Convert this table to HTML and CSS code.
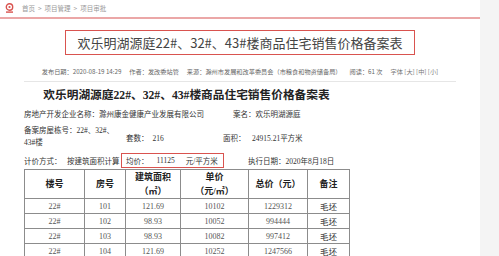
FILE: index.html
```html
<!DOCTYPE html>
<html lang="zh">
<head>
<meta charset="utf-8">
<link rel="stylesheet" href="styles.css">
</head>
<body>
<div class="main">
  <div class="crumb">
    <svg class="crumb-icon" width="9" height="10" viewBox="0 0 9 10">
      <circle cx="4.5" cy="4" r="3.2" fill="none" stroke="#d9534f" stroke-width="1.4"/>
      <circle cx="4.5" cy="4" r="1.1" fill="#d9534f"/>
      <rect x="1" y="8.4" width="7" height="1.4" fill="#d9534f"/>
    </svg>
    <span>首页</span><span class="sep">&gt;</span><span>项目管理</span><span class="sep">&gt;</span><span>项目审批</span>
  </div>
  <div class="titlewrap">
    <div class="titlebox">欢乐明湖源庭22#、32#、43#楼商品住宅销售价格备案表</div>
  </div>
  <div class="meta">
    <span>发布日期：2020-08-19 14:29</span>
    <span>作者：发改委站管</span>
    <span>来源：滁州市发展和改革委员会（市粮食和物资储备局）</span>
    <span>阅读：61 次</span>
    <span class="size">字体 [大] [中] [小]</span>
  </div>
  <div class="doc">
    <h1 class="doc-title">欢乐明湖源庭22#、32#、43#楼商品住宅销售价格备案表</h1>
    <div class="row r1">
      <div class="c-dev">房地产开发企业名称：滁州康金健康产业发展有限公司</div>
      <div class="c-name">案名：欢乐明湖源庭</div>
    </div>
    <div class="row r2">
      <div class="c-bld">备案房屋栋号：22#、32#、43#楼</div>
      <div class="c-sets">套数：<span class="num">216</span></div>
      <div class="c-area">面积：</div>
      <div class="c-areav">24915.21平方米</div>
    </div>
    <div class="row r3">
      <div class="c-way">计价方式：</div>
      <div class="c-wayv">按建筑面积计算</div>
      <div class="avg"><span>均价：</span><span class="avg-num">11125</span><span>元/平方米</span></div>
      <div class="c-date">执行日期：2020年8月18日</div>
    </div>
    <table class="price">
      <colgroup>
        <col class="w1"><col class="w2"><col class="w3"><col class="w4"><col class="w5"><col class="w6">
      </colgroup>
      <thead>
        <tr><th>楼号</th><th>房号</th><th>建筑面积<br>（㎡）</th><th>单价<br>（元/㎡）</th><th>总价（元）</th><th>备注</th></tr>
      </thead>
      <tbody>
        <tr><td>22#</td><td>101</td><td>121.69</td><td>10102</td><td>1229312</td><td class="note">毛坯</td></tr>
        <tr><td>22#</td><td>102</td><td>98.93</td><td>10052</td><td>994444</td><td class="note">毛坯</td></tr>
        <tr><td>22#</td><td>103</td><td>98.93</td><td>10082</td><td>997412</td><td class="note">毛坯</td></tr>
        <tr><td>22#</td><td>104</td><td>121.69</td><td>10252</td><td>1247566</td><td class="note">毛坯</td></tr>
      </tbody>
    </table>
  </div>
</div>
<div class="side"></div>
</body>
</html>
```
FILE: styles.css
```css
html, body {
  margin: 0;
  padding: 0;
  background: #fff;
}
body {
  display: flex;
  width: 499px;
  height: 256px;
  overflow: hidden;
  font-family: "Noto Sans CJK SC", "Noto Sans", sans-serif;
}
.main {
  width: 480px;
  flex: none;
}
.side {
  flex: 1;
  background: #f4f4f4;
}
.crumb {
  box-sizing: border-box;
  height: 19px;
  padding: 0 0 2px 5px;
  border-bottom: 2px solid #eba7a7;
  display: flex;
  align-items: center;
  font-size: 6.5px;
  color: #999;
}
.crumb-icon {
  margin-right: 8px;
}
.crumb .sep {
  margin: 0 3px;
}
.titlewrap {
  display: flex;
  justify-content: center;
  padding-top: 11px;
}
.titlebox {
  width: 350px;
  height: 25px;
  box-sizing: border-box;
  border: 1.5px solid #d9534f;
  font-size: 13px;
  color: #444;
  display: flex;
  align-items: center;
  justify-content: center;
}
.meta {
  display: flex;
  justify-content: center;
  gap: 8px;
  margin-top: 10px;
  height: 12px;
  align-items: center;
  font-size: 6.2px;
  color: #666;
  white-space: nowrap;
}
.meta .size {
  color: #777;
}
.doc {
  margin: 4px 24px 0;
  border-top: 1px solid #e6e6e6;
  width: 432px;
  font-family: "Liberation Serif", "Noto Sans CJK SC", serif;
  color: #333;
  font-size: 7.5px;
}
.doc-title {
  width: 325px;
  margin: 0;
  padding-top: 5px;
  height: 18px;
  line-height: 18px;
  font-size: 11.7px;
  font-weight: bold;
  text-align: center;
  color: #222;
}
.row {
  display: flex;
  align-items: center;
  white-space: nowrap;
}
.row > div {
  flex: none;
}
.r1 {
  height: 17px;
}
.c-dev {
  width: 209px;
}
.r2 {
  height: 28px;
  margin-top: 1px;
}
.c-bld {
  width: 94px;
  margin-right: 8px;
  white-space: normal;
  line-height: 12px;
}
.c-sets {
  width: 97px;
}
.num {
  margin-left: 4px;
}
.c-area {
  width: 29px;
}
.r3 {
  height: 18px;
}
.c-way {
  width: 43px;
}
.c-wayv {
  width: 54px;
}
.avg {
  width: 103px;
  height: 15px;
  box-sizing: border-box;
  border: 1.5px solid #d9534f;
  display: flex;
  align-items: center;
  padding-left: 4px;
}
.avg-num {
  margin-left: 8px;
  margin-right: 11px;
}
.c-date {
  margin-left: 24px;
}
.price {
  border-collapse: collapse;
  width: 325px;
  table-layout: fixed;
}
.w1 { width: 60px; }
.w2 { width: 41px; }
.w3 { width: 55px; }
.w4 { width: 68px; }
.w5 { width: 59px; }
.w6 { width: 42px; }
.price th, .price td {
  border: 1px solid #8c8c8c;
  text-align: center;
  padding: 0;
}
.price th {
  height: 28px;
  font-size: 9px;
  font-weight: bold;
  line-height: 14px;
  color: #222;
}
.price td {
  height: 14px;
  font-size: 8px;
  color: #555;
}
.price td.note {
  font-size: 8.5px;
  color: #333;
}
```
